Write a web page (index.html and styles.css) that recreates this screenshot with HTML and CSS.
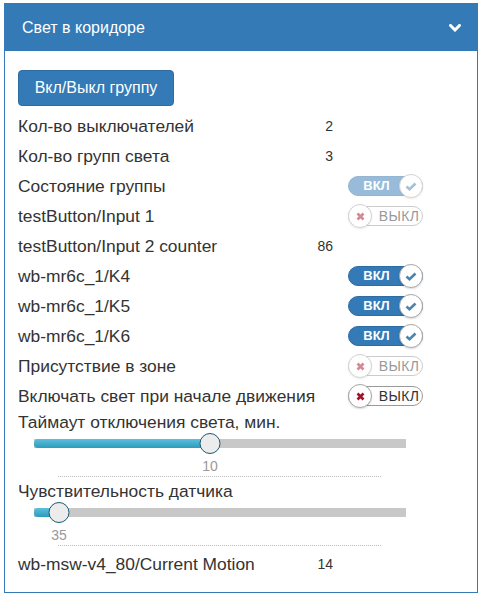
FILE: index.html
```html
<!DOCTYPE html>
<html lang="ru">
<head>
<meta charset="utf-8">
<title>Свет в коридоре</title>
<link rel="stylesheet" href="styles.css">
</head>
<body>
<div class="panel">
  <div class="panel-heading">
    <span class="title">Свет в коридоре</span>
    <svg class="chev" width="12" height="8" viewBox="0 0 12 8"><polyline points="1.5,1.5 6,6 10.5,1.5" fill="none" stroke="#fff" stroke-width="3" stroke-linecap="square"/></svg>
  </div>
  <div class="panel-body">
    <button class="btn">Вкл/Выкл группу</button>
    <div class="rows">
      <div class="row"><span class="label">Кол-во выключателей</span><span class="value">2</span></div>
      <div class="row"><span class="label">Кол-во групп света</span><span class="value">3</span></div>
      <div class="row"><span class="label">Состояние группы</span><span class="value"></span>
        <span class="toggle on disabled"><span class="t-text">ВКЛ</span><span class="knob"><svg width="12" height="9" viewBox="0 0 12 9"><polyline points="1.5,4.5 4.5,7.2 10.5,1.5" fill="none" stroke="#4d84ad" stroke-width="2.6"/></svg></span></span></div>
      <div class="row"><span class="label">testButton/Input 1</span><span class="value"></span>
        <span class="toggle off disabled"><span class="knob"><svg width="9" height="9" viewBox="0 0 9 9"><path d="M1.5 1.5 L7.5 7.5 M7.5 1.5 L1.5 7.5" stroke="#b0112b" stroke-width="2.6"/></svg></span><span class="t-text">ВЫКЛ</span></span></div>
      <div class="row"><span class="label">testButton/Input 2 counter</span><span class="value">86</span></div>
      <div class="row"><span class="label">wb-mr6c_1/K4</span><span class="value"></span>
        <span class="toggle on"><span class="t-text">ВКЛ</span><span class="knob"><svg width="12" height="9" viewBox="0 0 12 9"><polyline points="1.5,4.5 4.5,7.2 10.5,1.5" fill="none" stroke="#4d84ad" stroke-width="2.6"/></svg></span></span></div>
      <div class="row"><span class="label">wb-mr6c_1/K5</span><span class="value"></span>
        <span class="toggle on"><span class="t-text">ВКЛ</span><span class="knob"><svg width="12" height="9" viewBox="0 0 12 9"><polyline points="1.5,4.5 4.5,7.2 10.5,1.5" fill="none" stroke="#4d84ad" stroke-width="2.6"/></svg></span></span></div>
      <div class="row"><span class="label">wb-mr6c_1/K6</span><span class="value"></span>
        <span class="toggle on"><span class="t-text">ВКЛ</span><span class="knob"><svg width="12" height="9" viewBox="0 0 12 9"><polyline points="1.5,4.5 4.5,7.2 10.5,1.5" fill="none" stroke="#4d84ad" stroke-width="2.6"/></svg></span></span></div>
      <div class="row"><span class="label">Присутствие в зоне</span><span class="value"></span>
        <span class="toggle off disabled"><span class="knob"><svg width="9" height="9" viewBox="0 0 9 9"><path d="M1.5 1.5 L7.5 7.5 M7.5 1.5 L1.5 7.5" stroke="#b0112b" stroke-width="2.6"/></svg></span><span class="t-text">ВЫКЛ</span></span></div>
      <div class="row"><span class="label">Включать свет при начале движения</span><span class="value"></span>
        <span class="toggle off"><span class="knob"><svg width="9" height="9" viewBox="0 0 9 9"><path d="M1.5 1.5 L7.5 7.5 M7.5 1.5 L1.5 7.5" stroke="#a50f28" stroke-width="2.6"/></svg></span><span class="t-text">ВЫКЛ</span></span></div>
    </div>
    <div class="range">
      <div class="range-label">Таймаут отключения света, мин.</div>
      <div class="slider" style="--p:47.3%"><div class="track"><div class="fill"></div></div><div class="thumb"></div></div>
      <div class="range-value" style="--p:47.3%"><span>10</span></div>
      <div class="sep"></div>
    </div>
    <div class="range">
      <div class="range-label">Чувствительность датчика</div>
      <div class="slider" style="--p:6.7%"><div class="track"><div class="fill"></div></div><div class="thumb"></div></div>
      <div class="range-value" style="--p:6.7%"><span>35</span></div>
      <div class="sep"></div>
    </div>
    <div class="row last"><span class="label">wb-msw-v4_80/Current Motion</span><span class="value">14</span></div>
  </div>
</div>
</body>
</html>
```

FILE: styles.css
```css
* { box-sizing: border-box; }
body {
  margin: 0;
  background: #fff;
  font-family: "Liberation Sans", Arial, sans-serif;
  color: #333;
}
.panel {
  margin: 3px 0 0 4px;
  width: 474px;
  height: 590px;
  border: 1px solid #337ab7;
}
.panel-heading {
  background: #337ab7;
  color: #fff;
  display: flex;
  align-items: center;
  justify-content: space-between;
  padding: 13px 17px 12px 18px;
  margin: -1px -1px 0 -1px;
  font-size: 16px;
  line-height: 23px;
}
.chev { display: block; }
.panel-body {
  padding: 19px 13px 0 13px;
}
.btn {
  display: block;
  background: #337ab7;
  border: 1px solid #2e6da4;
  border-radius: 4px;
  color: #fff;
  font-family: inherit;
  font-size: 16px;
  line-height: 22px;
  padding: 6px 15px;
  height: 36px;
  width: 156px;
}
.rows { margin-top: 5px; }
.row {
  display: flex;
  align-items: center;
  height: 30px;
  font-size: 17.4px;
}
.label {
  flex: 0 0 290px;
  min-width: 0;
  white-space: nowrap;
}
.value {
  flex: 0 0 25px;
  text-align: right;
  font-size: 14px;
}
.toggle {
  flex: 0 0 75px;
  margin-left: 15px;
  width: 75px;
  height: 20px;
  border-radius: 10px;
  display: flex;
  align-items: center;
  font-size: 13px;
}
.toggle.on {
  background: #337ab7;
  border: 1px solid #2e6da4;
  color: #fff;
  font-weight: bold;
}
.toggle.off {
  background: #fff;
  border: 1px solid #9a9a9a;
  color: #333;
  font-size: 14px;
}
.toggle.disabled { opacity: 0.5; }
.t-text {
  flex: 1;
  text-align: center;
  line-height: 18px;
}
.toggle.on .t-text { padding-left: 5px; }
.toggle.off .t-text { padding-left: 4px; letter-spacing: 0.4px; }
.knob {
  flex: 0 0 24px;
  width: 24px;
  height: 24px;
  margin: -2px 0;
  border-radius: 50%;
  background: #fff;
  border: 1px solid #a8a8a8;
  box-shadow: 0 1px 2px rgba(0,0,0,0.15);
  display: flex;
  align-items: center;
  justify-content: center;
}
.toggle.on .knob { margin-right: -1px; }
.toggle.off .knob { margin-left: -1px; }
.knob svg { display: block; }
.range-label {
  font-size: 17.4px;
  line-height: 22px;
  white-space: nowrap;
}
.slider {
  position: relative;
  margin-left: 16px;
  width: 372px;
  height: 21px;
  display: flex;
  align-items: center;
}
.track {
  width: 100%;
  height: 9px;
  background: #c8c8c8;
}
.fill {
  width: var(--p);
  height: 100%;
  border-radius: 4px 0 0 4px;
  background: linear-gradient(#5bc0de, #2c9bba);
}
.thumb {
  position: absolute;
  left: var(--p);
  top: 0;
  width: 21px;
  height: 21px;
  transform: translateX(-50%);
  border-radius: 50%;
  background: #ececec;
  border: 1.5px solid #1d5a70;
}
.range-value {
  margin: 2px 0 0 16px;
  width: 372px;
  height: 20px;
  font-size: 14px;
  line-height: 20px;
  color: #999;
}
.range-value span {
  display: inline-block;
  margin-left: var(--p);
  transform: translateX(-50%);
}
.sep {
  margin: 0 83px 3px 40px;
  border-top: 1px dotted #bdbdbd;
}
```
